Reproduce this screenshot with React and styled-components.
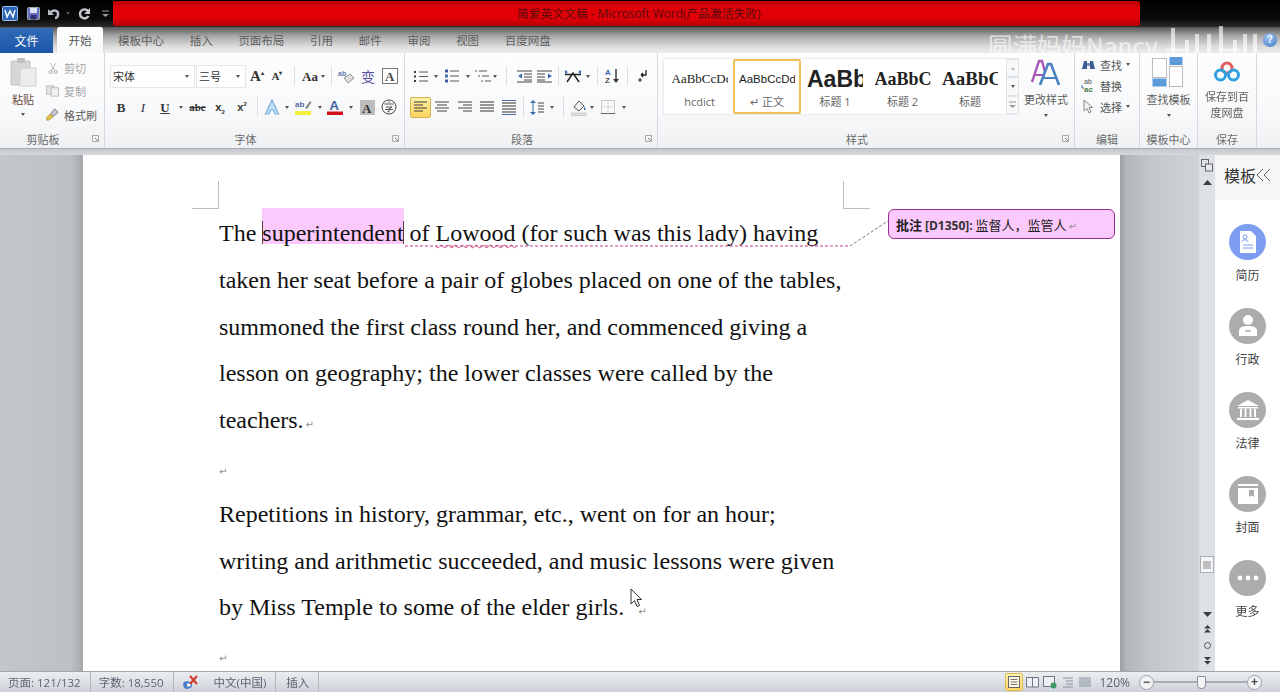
import React from "react";
import styled, { createGlobalStyle } from "styled-components";

const Global = createGlobalStyle`
  html, body { margin: 0; padding: 0; height: 692px; overflow: hidden; background: #c5c9cd; }
  #root { height: 692px; }
  * { box-sizing: border-box; }
`;
const UI = `"Open Sans", "Noto Sans CJK SC", "Liberation Sans", sans-serif`;

const Shell = styled.div`
  width: 1280px; height: 692px; display: flex; flex-direction: column; overflow: hidden;
  font-family: ${UI}; color: #555; font-size: 11px; filter: blur(.3px);
`;
const Header = styled.div`position: relative; height: 53px; overflow: hidden; flex: none;`;
const TitleBar = styled.div`
  height: 27px; display: flex; background: linear-gradient(#000, #0a0a0a 70%, #2a2a2a);
`;
const Quick = styled.div`width: 113px; display: flex; align-items: center; padding-left: 1px; flex: none;`;
const QuickSlot = styled.span`
  width: ${p => p.$w}px; display: flex; justify-content: center; align-items: center; flex: none;
`;
const RedBar = styled.div`
  width: 1027px; height: 25px; margin-top: 1px; border-radius: 2px; flex: none;
  background: linear-gradient(#b80000, #e30008 30%, #e00008 70%, #b40005);
  color: #540c0e; font-size: 11.8px; line-height: 25px; padding-left: 404px; white-space: nowrap;
`;
const TabRow = styled.div`
  height: 26px; display: flex; align-items: flex-end;
  background: linear-gradient(#565656, #a8a8a8 35%, #dcdcdc 75%, #ececec);
`;
const FileTab = styled.div`
  width: 53px; height: 25px; background: linear-gradient(#2f6cb8, #1d55a6); color: #fff;
  font-size: 12px; display: flex; align-items: center; justify-content: center; border-radius: 2px 2px 0 0;
`;
const ActiveTab = styled.div`
  width: 46px; height: 26px; margin: 0 15px 0 4px; background: linear-gradient(#fff, #f8f9fa); color: #555;
  font-size: 11.5px; display: flex; align-items: center; justify-content: center;
  border-radius: 3px 3px 0 0; box-shadow: 0 0 1px #999;
`;
const Tab = styled.div`
  height: 26px; margin-right: 25.7px; color: #5d5d5d; font-size: 11.5px; display: flex; align-items: center;
`;
const Watermark = styled.div`
  position: absolute; left: 988px; top: 31px; font-size: 24.5px; line-height: 30px; color: rgba(255,255,255,.62);
  font-family: "Noto Sans CJK SC", "Noto Sans", sans-serif; white-space: nowrap;
`;
const LogoMark = styled.svg`position: absolute; left: 1165px; top: 20px;`;
const HelpDot = styled.div`
  position: absolute; left: 1263px; top: 33px; width: 14px; height: 14px; border-radius: 50%;
  background: radial-gradient(circle at 40% 30%, #9cc4f2, #3f79c4); color: #fff; font: bold 10px/14px "Liberation Sans", sans-serif; text-align: center;
`;

const Ribbon = styled.div`
  height: 96px; flex: none; display: flex; background: linear-gradient(#fdfdfe, #f8f9fa 60%, #eff1f3);
  border-bottom: 1px solid #a9adb2;
`;
const Group = styled.div`
  width: ${p => p.$w}px; flex: none; display: flex; flex-direction: column; border-right: 1px solid #d5d8dc;
`;
const Body = styled.div`height: 76px; padding-top: ${p => p.$pt ?? 8}px; display: flex; flex-direction: ${p => p.$row ? "row" : "column"};`;
const GroupLabel = styled.div`height: 19px; display: flex; align-items: center; color: #6b6b6b; font-size: 11px;`;
const LabelText = styled.span`flex: 1; text-align: center;`;
const Launcher = styled.span`width: 18px; display: flex; justify-content: center;`;
const ToolRow = styled.div`
  height: ${p => p.$h}px; display: flex; align-items: center; padding-left: ${p => p.$pl || 0}px;
`;
const Tool = styled.span`
  width: ${p => p.$w}px; flex: none; display: flex; align-items: center; justify-content: center;
  height: ${p => p.$on ? "21px" : "auto"}; color: #333;
  ${p => p.$on && "background: linear-gradient(#fff2a8, #fcd35f); border: 1px solid #d8b050; border-radius: 2px;"}
`;
const Caret = styled.i`
  display: block; width: 0; height: 0; border: 2.5px solid transparent; border-top: 3px solid #555; border-bottom: 0;
`;
const UpCaret = styled.i`
  display: block; width: 0; height: 0; border: 2.5px solid transparent; border-bottom: 3px solid #bbb; border-top: 0;
`;
const Divider = styled.span`
  width: 1px; height: 20px; background: #dcdfe3; margin: 0 ${p => p.$m}px; flex: none;
`;
const Select = styled.div`
  width: ${p => p.$w}px; height: 23px; background: #fff; border: 1px solid #e4e6e9; margin-right: 1px; flex: none;
  display: flex; align-items: center; justify-content: space-between; padding: 0 5px 0 2px; color: #333; font-size: 11px;
`;
const PasteColumn = styled.div`width: 46px; flex: none; display: flex; flex-direction: column; align-items: center; color: #6b4a42;`;
const PasteName = styled.span`margin-top: 5px; line-height: 16px; font-size: 11px;`;
const BelowCaret = styled.span`margin-top: ${p => p.$m || 6}px; display: block;`;
const SmallColumn = styled.div`display: flex; flex-direction: column; margin-top: -1px;`;
const SmallTool = styled.div`
  height: 23.5px; display: flex; align-items: center; gap: 5px; font-size: 11px; color: ${p => p.$dim ? "#a4a4a4" : "#5b5b5b"};
`;
const Gallery = styled.div`
  width: 355px; height: 57px; margin: 0 0 0 5px; background: #fff; border: 1px solid #e8eaed; border-right: 0;
  display: flex; padding-left: 2px; flex: none;
`;
const StyleCard = styled.div`
  width: ${p => p.$w}px; flex: none; display: flex; flex-direction: column; align-items: center; overflow: hidden;
  ${p => p.$on && "border: 2px solid #eec25a; border-radius: 2px; box-shadow: inset 0 0 2px #fff6c8;"}
  padding-top: ${p => p.$on ? 3 : 5}px;
`;
const Sample = styled.div`
  height: 30px; line-height: 30px; white-space: nowrap; color: #222; overflow: hidden; width: 56px; text-align: left;
  font: ${p => p.$font};
`;
const StyleName = styled.div`font-size: 11px; line-height: 16px; color: #666;`;
const Scroller = styled.div`width: 13px; margin-left: 2px; display: flex; flex-direction: column; flex: none;`;
const ScrollBtn = styled.div`
  flex: 1; background: #f7f8f9; border: 1px solid #e0e3e6; display: flex; align-items: center; justify-content: center;
`;
const BigTool = styled.div`
  width: ${p => p.$w}px; flex: none; display: flex; flex-direction: column; align-items: center; color: #5f5f5f; font-size: 11px; line-height: 16px;
`;
const BigCaption = styled.span`margin-top: ${p => p.$m || 0}px;`;
const EditRow = styled.div`
  height: 21px; display: flex; align-items: center; padding-left: 6px; gap: 4px; font-size: 11px; color: #555;
`;

const Separator = styled.div`height: 6px; flex: none; background: linear-gradient(#c5c8cc, #d6d9dc);`;
const Workspace = styled.div`height: 516px; flex: none; display: flex;`;
const LeftGutter = styled.div`width: 83px; flex: none; background: linear-gradient(90deg, #c3c7ca, #bdc1c4 85%, #a6a9ac);`;
const Page = styled.div`
  width: 1037px; flex: none; background: #fff; position: relative; overflow: hidden; padding: 55px 0 0 136px;
`;
const RightGutter = styled.div`width: 79px; flex: none; background: linear-gradient(90deg, #9b9ea2, #b3b7bb 8%, #c2c7cb 40%, #cfd4d9);`;
const Line = styled.div`
  height: 46.8px; font-family: "Liberation Serif", serif; font-size: 24px; line-height: 46px; color: #111; white-space: nowrap;
`;
const Marked = styled.span`
  position: relative; display: inline-block; background: #fcc9fc; height: 36px; line-height: 24px; padding-top: 13px; vertical-align: baseline;
  margin-top: -8px;
  &::before, &::after { content: ""; position: absolute; top: 13px; bottom: 0; width: 1px; background: #5b3a3a; }
  &::before { left: 0; }
  &::after { right: 0; }
`;
const Wavy = styled.span`text-decoration: underline wavy #d9487a 1px; text-underline-offset: 3px;`;
const Para = styled.span`
  font-family: "DejaVu Sans", sans-serif; font-size: 10px; color: #8e8e8e; margin-left: ${p => p.$gap ?? 2}px;
`;
const Crop = styled.div`
  position: absolute; width: 27px; height: 28px; top: 26px; left: ${p => p.$x}px; border-bottom: 1px solid #bdbdbd;
  ${p => p.$r ? "border-left: 1px solid #bdbdbd;" : "border-right: 1px solid #bdbdbd;"}
`;
const Connector = styled.svg`position: absolute; left: 0; top: 0;`;
const Comment = styled.div`
  position: absolute; left: 805px; top: 54px; width: 227px; height: 30px; background: #fcc9fc;
  border: 1px solid #932c93; border-radius: 6px; padding-left: 7px; font-size: 13px; line-height: 29px; color: #222;
  font-family: "Noto Sans CJK SC", sans-serif; white-space: nowrap;
`;
const CommentHead = styled.b`font-family: "Noto Sans CJK SC", sans-serif;`;
const CommentRef = styled.b`font-family: "Open Sans", sans-serif; font-size: 12px; color: #333;`;
const Pointer = styled.svg`position: absolute; left: 547px; top: 433px;`;

const VBar = styled.div`width: 16px; flex: none; background: #dde1e6; display: flex; flex-direction: column; align-items: center;`;
const VSlot = styled.div`height: ${p => p.$h}px; margin-top: ${p => p.$t || 0}px; display: flex; align-items: center; justify-content: center;`;
const Thumb = styled.div`
  width: 14px; height: 17px; margin-top: 368px; background: #f5f6f8; border: 1px solid #a9afb6; display: flex; align-items: center; justify-content: center;
`;
const SidePanel = styled.div`width: 65px; flex: none; background: #fff; display: flex; flex-direction: column; align-items: center;`;
const PanelHead = styled.div`
  width: 100%; height: 45px; padding-bottom: 6px; background: #f6f6f6; display: flex; align-items: center; justify-content: center;
  color: #333; font-size: 16px;
`;
const PanelList = styled.div`display: flex; flex-direction: column; gap: 25px; padding-top: 24px;`;
const PanelItem = styled.div`display: flex; flex-direction: column; align-items: center; gap: 9px; color: #444; font-size: 12px; line-height: 14px;`;
const Round = styled.div`
  width: 37px; height: 36px; border-radius: 50%; background: ${p => p.$c}; display: flex; align-items: center; justify-content: center;
`;

const StatusBar = styled.div`
  height: 21px; flex: none; display: flex; align-items: center; background: linear-gradient(#eceef1, #dde0e5 50%, #cdd1d7);
  border-top: 1px solid #a3a7ac; color: #5b6470; font-size: 11.5px; white-space: nowrap;
`;
const StatusCell = styled.div`
  height: 100%; display: flex; align-items: center; gap: ${p => p.$gap || 0}px; padding: 0 ${p => p.$pr ?? 9}px 0 ${p => p.$pl ?? 8}px;
  border-right: 1px solid #b3b7bd; flex: none;
`;
const StatusRight = styled.div`margin-left: auto; display: flex; align-items: center; height: 100%;`;
const ViewBtn = styled.span`
  width: ${p => p.$w || 18}px; height: 18px; display: flex; align-items: center; justify-content: center; flex: none;
  ${p => p.$on && "background: linear-gradient(#fff3b0, #fbd76a); border: 1px solid #e0b94f; border-radius: 2px;"}
`;
const Zoom = styled.span`margin: 0 9px 0 7px; font-size: 12px; color: #5b6470;`;
const RoundBtn = styled.span`
  width: 15px; height: 15px; border-radius: 50%; border: 1px solid #9aa0a8; background: #f3f4f6; flex: none;
  display: flex; align-items: center; justify-content: center; font: bold 12px/12px "Liberation Sans", sans-serif; color: #4a4a4a;
`;
const Track = styled.div`
  width: 93px; height: 2px; background: #a8adb4; display: flex; justify-content: flex-start; align-items: center; padding-left: 43px;
`;
const Handle = styled.span`
  width: 9px; height: 13px; background: #f5f5f5; border: 1px solid #8a9099; border-radius: 1px 1px 4px 4px; flex: none;
`;
const Grip = styled.span`width: 18px;`;

const S = ({ w = 16, h = 16, vb, children }) => (
  <svg width={w} height={h} viewBox={vb || `0 0 ${w} ${h}`} fill="none">{children}</svg>
);
const Lines = ({ ys, x1 = 2, x2 = 14, c = "#444" }) => ys.map((y, i) => (
  <path key={i} d={`M${Array.isArray(x1) ? x1[i] : x1} ${y}H${Array.isArray(x2) ? x2[i] : x2}`} stroke={c} />
));
const Launch = () => <S w={7} h={7}><path d="M.5 .5H6.5V6.5H.5Z" stroke="#aaa" /><path d="M3 3L6 6" stroke="#777" /></S>;

const Word = () => <S w={16} h={15}><rect x=".5" y=".5" width="15" height="14" rx="1" fill="#2a64b4" stroke="#9dc0ea" /><path d="M3 4L5 11L8 5L11 11L13 4" stroke="#fff" strokeWidth="1.5" /></S>;
const Save = () => <S w={13} h={13}><rect x=".5" y=".5" width="12" height="12" rx="1" fill="#6b6fc4" stroke="#9aa" /><rect x="3" y="1" width="7" height="5" fill="#dfe2f4" /><rect x="3.5" y="8" width="6" height="4.5" fill="#2e2f70" /></S>;
const Undo = () => <S w={14} h={13}><path d="M3 6C6 2 12 3 11 8C10.7 10 9 11 8 11" stroke="#b8bcc6" strokeWidth="2.4" /><path d="M1 2V8H7Z" fill="#b8bcc6" /></S>;
const Redo = () => <S w={13} h={13}><path d="M10 4A4.5 4.5 0 1 0 10.5 9" stroke="#c8cad0" strokeWidth="2.4" /><path d="M12 1V7H6Z" fill="#c8cad0" /></S>;
const Custom = () => <S w={7} h={8}><path d="M0 1H7" stroke="#9a9a9a" /><path d="M0 4H7L3.5 7Z" fill="#9a9a9a" /></S>;

const Paste = () => <S w={27} h={30}><rect x="1" y="4" width="19" height="24" rx="1" fill="#d6d6d6" stroke="#c4c4c4" /><rect x="7" y="1" width="8" height="5" fill="#c0c0c0" /><rect x="10" y="11" width="16" height="18" fill="#ececec" stroke="#d0d0d0" /></S>;
const Scissor = () => <S w={10} h={12}><path d="M2 1L7 9M8 1L3 9" stroke="#bbb" /><circle cx="2.5" cy="10" r="1.5" stroke="#aaa" /><circle cx="7.5" cy="10" r="1.5" stroke="#aaa" /></S>;
const CopyIco = () => <S w={14} h={12}><rect x=".5" y=".5" width="8" height="9" fill="#e2e2e2" stroke="#bbb" /><rect x="5.5" y="2.5" width="8" height="9" fill="#f0f0f0" stroke="#bbb" /></S>;
const Brush = () => <S w={15} h={15}><path d="M10 1L14 5L8 10L5 7Z" fill="#c4c8d0" stroke="#777" /><path d="M5 7L8 10L3 14H1V11Z" fill="#e7c94d" stroke="#a89030" /></S>;

const Letter = styled.span`
  font-family: ${p => p.$f || '"Liberation Serif", serif'}; font-weight: ${p => p.$b ? 700 : 400}; font-style: ${p => p.$i ? "italic" : "normal"};
  font-size: ${p => p.$s}px; color: ${p => p.$c || "#333"}; text-decoration: ${p => p.$u ? "underline" : p.$st ? "line-through" : "none"}; line-height: 1;
`;
const Sup = styled.sup`font-size: 6px; line-height: 0;`;
const Sub = styled.sub`font-size: 6px; line-height: 0;`;
const Eraser = () => <S w={18} h={16}><text x="1" y="8" fontSize="7" fontWeight="700" fill="#6a78b0" fontFamily="Liberation Sans">ab</text><path d="M7 10L13 6L17 10L11 15Z" fill="#ddd" stroke="#999" /></S>;
const Boxed = () => <S w={16} h={16}><rect x=".5" y=".5" width="15" height="15" fill="#fff" stroke="#777" /><text x="3" y="13" fontSize="13" fontWeight="700" fill="#444" fontFamily="Liberation Serif">A</text></S>;
const Highlight = () => <S w={17} h={17}><text x="0" y="8" fontSize="8" fontWeight="700" fill="#5a66a8" fontFamily="Liberation Sans">ab</text><path d="M10 9L15 2L16.5 3.5L12 10Z" fill="#888" /><rect y="12" width="16" height="4" fill="#f6ee3c" /></S>;
const ColorA = () => <S w={16} h={17}><text x="2.5" y="11" fontSize="13" fontWeight="700" fill="#3e5fa4" fontFamily="Liberation Sans">A</text><rect y="12.5" width="16" height="3.5" fill="#d4121c" /></S>;
const GreyA = () => <S w={15} h={15}><rect width="15" height="15" fill="#bdbdbd" /><text x="2" y="13" fontSize="13" fontWeight="700" fill="#333" fontFamily="Liberation Serif">A</text></S>;
const Circled = () => <S w={16} h={16}><circle cx="8" cy="8" r="7" stroke="#444" /><path d="M8 2.5V4M3.5 5H12.5M5 8H11L8 10V13L6.5 12.5M4 10.5H12" stroke="#444" strokeWidth=".9" /></S>;
const GlowA = () => <S w={16} h={16}><path d="M8 1L14.5 15H11L9.5 11H6.5L5 15H1.5Z" fill="#c4e0f6" stroke="#7eb0e0" strokeWidth="1.2" /></S>;

const Bullets = () => <S w={14} h={13}>{[2, 6.5, 11].map(y => <React.Fragment key={y}><rect x="0" y={y - 1} width="2" height="2" fill="#3a3a3a" /><path d={`M5 ${y}H14`} stroke="#555" /></React.Fragment>)}</S>;
const Numbers = () => <S w={14} h={14}>{[2, 7, 12].map((y, i) => <React.Fragment key={y}><rect x="0" y={y - 1.5} width="3" height="3" fill={i === 1 ? "#4d6fb0" : "#3a5a98"} /><path d={`M5 ${y}H14`} stroke="#555" /></React.Fragment>)}</S>;
const Multi = () => <S w={16} h={14}><path d="M0 2H2M4 2H12M3 7H5M7 7H14M6 12H8M10 12H16" stroke="#555" /></S>;
const Outdent = () => <S w={16} h={13}><Lines ys={[1, 4, 7, 10, 12]} x1={[0, 7, 7, 7, 0]} x2={[15, 15, 15, 15, 15]} /><path d="M5 3.5L1 6L5 8.5Z" fill="#3b68a8" /></S>;
const Indent = () => <S w={16} h={13}><Lines ys={[1, 4, 7, 10, 12]} x1={[0, 0, 0, 0, 0]} x2={[15, 8, 8, 8, 15]} /><path d="M11 3.5L15 6L11 8.5Z" fill="#3b68a8" /></S>;
const Asian = () => <S w={18} h={13}><path d="M3 12L9 3L15 12M1 4.5H17" stroke="#222" strokeWidth="1.5" /><path d="M1 0L4 2L1 4ZM17 0L14 2L17 4Z" fill="#3b68a8" /></S>;
const Sort = () => <S w={16} h={16}><text x="0" y="7" fontSize="8" fill="#3b68a8" fontFamily="Liberation Sans" fontWeight="700">A</text><text x="0" y="15" fontSize="8" fill="#555" fontFamily="Liberation Sans" fontWeight="700">Z</text><path d="M11 1V13" stroke="#333" strokeWidth="1.4" /><path d="M8 11H14L11 15Z" fill="#333" /></S>;
const Pilcrow = () => <S w={12} h={14}><path d="M9 1V6H4M4 6L6 4M4 6L6 8" stroke="#222" strokeWidth="1.3" /><path d="M1 11H5M3 9V13" stroke="#222" /></S>;
const AlignLeft = () => <S w={14} h={12}><Lines ys={[1, 4, 7, 10]} x1={0} x2={[13, 9, 13, 9]} c="#3c3c3c" /></S>;
const AlignCenter = () => <S w={14} h={12}><Lines ys={[1, 4, 7, 10]} x1={[0, 2, 0, 2]} x2={[14, 12, 14, 12]} /></S>;
const AlignRight = () => <S w={14} h={12}><Lines ys={[1, 4, 7, 10]} x1={[0, 5, 0, 5]} x2={14} /></S>;
const Justify = () => <S w={14} h={12}><Lines ys={[1, 4, 7, 10]} x1={0} x2={14} c="#333" /></S>;
const Distribute = () => <S w={16} h={15}><Lines ys={[3, 6, 9, 12]} x1={1} x2={15} c="#333" /><path d="M1 .5H15M1 14.5H15" stroke="#4a6aa8" /></S>;
const Spacing = () => <S w={14} h={15}><path d="M3 0L6 3H0ZM3 15L0 12H6Z" fill="#3b68a8" /><path d="M3 3V12" stroke="#3b68a8" /><Lines ys={[3, 6, 9, 12]} x1={8} x2={14} /></S>;
const Fill = () => <S w={16} h={17}><path d="M3 8L8 2L13 7L8 12Z" fill="#f0f0f0" stroke="#555" /><path d="M13 7L15 11L13 11Z" fill="#3b68a8" /><rect y="14" width="15" height="2.5" fill="#e4e4e4" stroke="#aaa" strokeWidth=".5" /></S>;
const Borders = () => <S w={14} h={14}><rect x=".5" y=".5" width="13" height="13" stroke="#a0a0a0" strokeDasharray="1 1" /><path d="M7 1V13M1 7H13" stroke="#bbb" strokeDasharray="1 1" /><path d="M0 13.5H14" stroke="#666" /></S>;

const ChangeIco = () => <S w={30} h={30}><path d="M1 24L8 3H11L14 14" stroke="#a858b8" strokeWidth="2.4" /><path d="M4 17H12" stroke="#a858b8" strokeWidth="2" /><path d="M9 27L17 6H20L28 27" stroke="#4a80c0" strokeWidth="2.6" /><path d="M12 20H25" stroke="#4a80c0" strokeWidth="2" /></S>;
const Binoc = () => <S w={15} h={13}><path d="M1 11L3 3H6V11ZM9 11V3H12L14 11Z" fill="#3a5c94" /><rect x="6" y="5" width="3" height="3" fill="#7b92b8" /></S>;
const Replace = () => <S w={15} h={15}><text x="3" y="6" fontSize="7" fill="#444" fontFamily="Liberation Sans">ab</text><text x="3" y="14" fontSize="8" fontWeight="700" fill="#4a7a4a" fontFamily="Liberation Sans">ac</text><path d="M1 7V10H3" stroke="#4a6aa8" /></S>;
const Arrow = () => <S w={15} h={15}><path d="M3 1V12L6 9.5L8 14L10 13L8 8.5H11.5Z" fill="#f4f4f4" stroke="#888" /></S>;
const Finder = () => <S w={33} h={32}><rect x=".5" y="1.5" width="14" height="19" fill="#fff" stroke="#bbb" /><rect x=".5" y="21.5" width="14" height="8" fill="#5d9bd8" /><rect x="17.5" y="0" width="13" height="8" fill="#5d9bd8" /><rect x="17.5" y="9.5" width="13" height="20" fill="#fff" stroke="#bbb" /></S>;
const Cloud = () => <S w={26} h={22}><circle cx="13" cy="7" r="5" stroke="#e05a5a" strokeWidth="3" /><circle cx="6.5" cy="14" r="5" stroke="#2f9fe0" strokeWidth="3" /><circle cx="19.5" cy="14" r="5" stroke="#2f9fe0" strokeWidth="3" /></S>;

const Ruler = () => <S w={12} h={13}><rect x=".5" y=".5" width="7" height="7" stroke="#666" /><rect x="4.5" y="5" width="7" height="7" stroke="#666" fill="#e8eaee" /></S>;
const Tri = ({ d }) => <S w={9} h={5}><path d={d ? "M0 0H9L4.5 5Z" : "M0 5H9L4.5 0Z"} fill="#3c3c3c" /></S>;
const Dbl = ({ d }) => <S w={7} h={8}><path d={d ? "M0 0H7L3.5 3.5ZM0 4H7L3.5 7.5Z" : "M0 3.5H7L3.5 0ZM0 7.5H7L3.5 4Z"} fill="#3c3c3c" /></S>;
const Ring = () => <S w={7} h={7}><circle cx="3.5" cy="3.5" r="3" stroke="#555" /></S>;
const ThumbLines = () => <S w={8} h={8}><Lines ys={[1, 3, 5, 7]} x1={0} x2={8} c="#888" /></S>;
const Chev = () => <S w={15} h={14}><path d="M7 1L1 7L7 13M14 1L8 7L14 13" stroke="#666" strokeWidth="1" /></S>;

const DocIco = () => <S w={18} h={22}><path d="M1 0H12L17 5V22H1Z" fill="#fff" /><circle cx="6" cy="6" r="2" stroke="#7b9cf0" /><path d="M3 11C3 8 9 8 9 11M4 14H14M4 17H14" stroke="#7b9cf0" /></S>;
const PersonIco = () => <S w={22} h={24}><circle cx="11" cy="6" r="5" fill="#fff" /><path d="M2 22V17C2 13 6 12 11 12C16 12 20 13 20 17V22Z" fill="#fff" /><path d="M8 17H14" stroke="#acacac" strokeWidth="1.4" /></S>;
const BankIco = () => <S w={24} h={22}><path d="M12 1L23 7H1Z" fill="#fff" /><path d="M2 8H22V9.5H2ZM1 19H23V21H1Z" fill="#fff" /><path d="M5 10V18M9.5 10V18M14.5 10V18M19 10V18" stroke="#fff" strokeWidth="2" /></S>;
const CoverIco = () => <S w={22} h={22}><path d="M1 1H21V3H1Z" fill="#fff" /><path d="M1 5H21V21H1Z" fill="#fff" /><path d="M12 7H17V14L14.5 12.5L12 14Z" fill="#acacac" /></S>;
const DotsIco = () => <S w={24} h={6}><circle cx="4" cy="3" r="2.4" fill="#fff" /><circle cx="12" cy="3" r="2.4" fill="#fff" /><circle cx="20" cy="3" r="2.4" fill="#fff" /></S>;

const LangIco = () => <S w={18} h={15}><path d="M1 9C1 6 6 5 9 8C12 11 8 14 5 14C3 14 1 12 1 9Z" fill="#4a7cc8" /><path d="M5 9C6 8 8 8 9 10C8 12 6 12 5 11Z" fill="#fff" /><path d="M8 1L15 9M15 1L8 9" stroke="#d3362c" strokeWidth="2" /></S>;
const PrintView = () => <S w={12} h={12}><rect x=".5" y=".5" width="11" height="11" stroke="#666" fill="#fffbe6" /><Lines ys={[3.5, 6, 8.5]} x1={2.5} x2={9.5} c="#777" /></S>;
const ReadView = () => <S w={13} h={12}><path d="M.5 1.5H6.5V11H.5ZM6.5 1.5H12.5V11H6.5Z" stroke="#6a7788" fill="#eef0f4" /></S>;
const WebView = () => <S w={14} h={13}><rect x=".5" y=".5" width="11" height="10" stroke="#6a7788" fill="#eef0f4" /><circle cx="10.5" cy="9.5" r="3" fill="#3f9a62" /></S>;
const OutlineView = () => <S w={12} h={11}><Lines ys={[1, 4, 7, 10]} x1={[1, 4, 4, 1]} x2={11} c="#8a94a2" /></S>;
const DraftView = () => <S w={12} h={11}><Lines ys={[1, 3, 5, 7, 9]} x1={0} x2={12} c="#8a94a2" /></S>;

const tabs = ["模板中心", "插入", "页面布局", "引用", "邮件", "审阅", "视图", "百度网盘"];
const styleCards = [
  { w: 67, name: "hcdict", sample: "AaBbCcDc", font: '13px/30px "Liberation Serif", serif' },
  { w: 68, name: "↵ 正文", sample: "AaBbCcDd", font: '11.5px/30px "Liberation Sans", sans-serif', on: true },
  { w: 68, name: "标题 1", sample: "AaBbC", font: '700 23px/30px "Liberation Sans", sans-serif' },
  { w: 67, name: "标题 2", sample: "AaBbC", font: '700 18px/30px "Liberation Serif", serif' },
  { w: 68, name: "标题", sample: "AaBbC", font: '700 19px/30px "Liberation Serif", serif' },
];
const panel = [
  { name: "简历", c: "#7d9ef0", icon: <DocIco /> },
  { name: "行政", c: "#acacac", icon: <PersonIco /> },
  { name: "法律", c: "#acacac", icon: <BankIco /> },
  { name: "封面", c: "#acacac", icon: <CoverIco /> },
  { name: "更多", c: "#acacac", icon: <DotsIco /> },
];
const logoBars = [[6, 8, 30], [20, 20, 20], [30, 14, 24], [42, 14, 24], [54, 6, 32], [68, 20, 20], [78, 14, 24], [88, 14, 24]];

export default function App() {
  return (
    <Shell>
      <Global />
      <Header>
        <TitleBar>
          <Quick>
            <QuickSlot $w={17}><Word /></QuickSlot>
            <QuickSlot $w={4} />
            <QuickSlot $w={22}><Save /></QuickSlot>
            <QuickSlot $w={20}><Undo /></QuickSlot>
            <QuickSlot $w={8}><Caret /></QuickSlot>
            <QuickSlot $w={24}><Redo /></QuickSlot>
            <QuickSlot $w={5} />
            <QuickSlot $w={8}><Custom /></QuickSlot>
          </Quick>
          <RedBar>简爱英文文稿 - Microsoft Word(产品激活失败)</RedBar>
        </TitleBar>
        <TabRow>
          <FileTab>文件</FileTab>
          <ActiveTab>开始</ActiveTab>
          {tabs.map(t => <Tab key={t}>{t}</Tab>)}
        </TabRow>
        <Watermark>圆满妈妈Nancy</Watermark>
        <LogoMark width="96" height="34" viewBox="0 0 96 34">
          {logoBars.map(([x, y, h]) => <rect key={x} x={x} y={y} width="4" height={h} fill="#fff" opacity=".62" />)}
          <path d="M0 30H22M54 30H76" stroke="#fff" strokeWidth="3" opacity=".5" />
        </LogoMark>
        <HelpDot>?</HelpDot>
      </Header>

      <Ribbon>
        <Group $w={105}>
          <Body $row $pt={4}>
            <PasteColumn>
              <Paste />
              <PasteName>粘贴</PasteName>
              <BelowCaret $m={5}><Caret /></BelowCaret>
            </PasteColumn>
            <SmallColumn>
              <SmallTool $dim><Tool $w={13}><Scissor /></Tool>剪切</SmallTool>
              <SmallTool $dim><Tool $w={13}><CopyIco /></Tool>复制</SmallTool>
              <SmallTool><Tool $w={13}><Brush /></Tool>格式刷</SmallTool>
            </SmallColumn>
          </Body>
          <GroupLabel><LabelText>剪贴板</LabelText><Launcher><Launch /></Launcher></GroupLabel>
        </Group>

        <Group $w={300}>
          <Body>
            <ToolRow $h={30} $pl={5}>
              <Select $w={85}>宋体<Caret /></Select>
              <Select $w={50}>三号<Caret /></Select>
              <Tool $w={20}><Letter $b $s={15}>A<Sup>▴</Sup></Letter></Tool>
              <Tool $w={20}><Letter $b $s={11}>A<Sup>▾</Sup></Letter></Tool>
              <Divider $m={6.5} />
              <Tool $w={18}><Letter $b $s={13}>Aa</Letter></Tool>
              <Tool $w={8}><Caret /></Tool>
              <Divider $m={3.5} />
              <Tool $w={22}><Eraser /></Tool>
              <Tool $w={22}><Letter $f='"Noto Sans CJK SC"' $s={14} $c="#5a4fa0">变</Letter></Tool>
              <Tool $w={22}><Boxed /></Tool>
            </ToolRow>
            <ToolRow $h={32} $pl={5}>
              <Tool $w={22}><Letter $b $s={13}>B</Letter></Tool>
              <Tool $w={22}><Letter $i $s={13}>I</Letter></Tool>
              <Tool $w={22}><Letter $b $u $s={13}>U</Letter></Tool>
              <Tool $w={10}><Caret /></Tool>
              <Tool $w={23}><Letter $b $st $s={11}>abc</Letter></Tool>
              <Tool $w={22}><Letter $b $f='"Liberation Sans"' $s={11}>x<Sub>2</Sub></Letter></Tool>
              <Tool $w={22}><Letter $b $f='"Liberation Sans"' $s={11}>x<Sup>2</Sup></Letter></Tool>
              <Divider $m={3.5} />
              <Tool $w={22}><GlowA /></Tool>
              <Tool $w={8}><Caret /></Tool>
              <Tool $w={24}><Highlight /></Tool>
              <Tool $w={9}><Caret /></Tool>
              <Tool $w={22}><ColorA /></Tool>
              <Tool $w={10}><Caret /></Tool>
              <Tool $w={22}><GreyA /></Tool>
              <Tool $w={22}><Circled /></Tool>
            </ToolRow>
          </Body>
          <GroupLabel><LabelText>字体</LabelText><Launcher><Launch /></Launcher></GroupLabel>
        </Group>

        <Group $w={253}>
          <Body>
            <ToolRow $h={30} $pl={7}>
              <Tool $w={18}><Bullets /></Tool>
              <Tool $w={12}><Caret /></Tool>
              <Tool $w={19}><Numbers /></Tool>
              <Tool $w={13}><Caret /></Tool>
              <Tool $w={18}><Multi /></Tool>
              <Tool $w={6}><Caret /></Tool>
              <Divider $m={8} />
              <Tool $w={20}><Outdent /></Tool>
              <Tool $w={20}><Indent /></Tool>
              <Divider $m={2.5} />
              <Tool $w={24}><Asian /></Tool>
              <Tool $w={6}><Caret /></Tool>
              <Divider $m={5.5} />
              <Tool $w={20}><Sort /></Tool>
              <Divider $m={3.5} />
              <Tool $w={24}><Pilcrow /></Tool>
            </ToolRow>
            <ToolRow $h={32} $pl={5}>
              <Tool $w={21} $on><AlignLeft /></Tool>
              <Tool $w={22}><AlignCenter /></Tool>
              <Tool $w={23}><AlignRight /></Tool>
              <Tool $w={22}><Justify /></Tool>
              <Tool $w={22}><Distribute /></Tool>
              <Divider $m={2.5} />
              <Tool $w={22}><Spacing /></Tool>
              <Tool $w={8}><Caret /></Tool>
              <Divider $m={6.5} />
              <Tool $w={18}><Fill /></Tool>
              <Tool $w={8}><Caret /></Tool>
              <Tool $w={24}><Borders /></Tool>
              <Tool $w={8}><Caret /></Tool>
            </ToolRow>
          </Body>
          <GroupLabel><LabelText>段落</LabelText><Launcher><Launch /></Launcher></GroupLabel>
        </Group>

        <Group $w={417}>
          <Body $row $pt={5}>
            <Gallery>
              {styleCards.map(c => (
                <StyleCard key={c.name} $w={c.w} $on={c.on}>
                  <Sample $font={c.font}>{c.sample}</Sample>
                  <StyleName>{c.name}</StyleName>
                </StyleCard>
              ))}
              <Scroller>
                <ScrollBtn><UpCaret /></ScrollBtn>
                <ScrollBtn><Caret /></ScrollBtn>
                <ScrollBtn><Custom /></ScrollBtn>
              </Scroller>
            </Gallery>
            <BigTool $w={56}>
              <ChangeIco />
              <BigCaption $m={4}>更改样式</BigCaption>
              <BelowCaret $m={6}><Caret /></BelowCaret>
            </BigTool>
          </Body>
          <GroupLabel><LabelText>样式</LabelText><Launcher><Launch /></Launcher></GroupLabel>
        </Group>

        <Group $w={65}>
          <Body $pt={1}>
            <EditRow><Binoc />查找<Caret /></EditRow>
            <EditRow><Replace />替换</EditRow>
            <EditRow><Arrow />选择<Caret /></EditRow>
          </Body>
          <GroupLabel><LabelText>编辑</LabelText></GroupLabel>
        </Group>

        <Group $w={58}>
          <Body $pt={4}>
            <BigTool $w={57}>
              <Finder />
              <BigCaption $m={3}>查找模板</BigCaption>
              <BelowCaret $m={6}><Caret /></BelowCaret>
            </BigTool>
          </Body>
          <GroupLabel><LabelText>模板中心</LabelText></GroupLabel>
        </Group>

        <Group $w={59}>
          <Body $pt={8}>
            <BigTool $w={58}>
              <Cloud />
              <BigCaption $m={6}>保存到百</BigCaption>
              <BigCaption>度网盘</BigCaption>
            </BigTool>
          </Body>
          <GroupLabel><LabelText>保存</LabelText></GroupLabel>
        </Group>
      </Ribbon>
      <Separator />

      <Workspace>
        <LeftGutter />
        <Page>
          <Line>The <Marked>superintendent</Marked> of <Wavy>Lowood</Wavy> (for such was this lady) having</Line>
          <Line>taken her seat before a pair of globes placed on one of the tables,</Line>
          <Line>summoned the first class round her, and commenced giving a</Line>
          <Line>lesson on geography; the lower classes were called by the</Line>
          <Line>teachers.<Para>↵</Para></Line>
          <Line><Para $gap={0}>↵</Para></Line>
          <Line>Repetitions in history, grammar, etc., went on for an hour;</Line>
          <Line>writing and arithmetic succeeded, and music lessons were given</Line>
          <Line>by Miss Temple to some of the elder girls.<Para $gap={14}>↵</Para></Line>
          <Line><Para $gap={0}>↵</Para></Line>
          <Crop $x={109} />
          <Crop $x={760} $r />
          <Connector width="1037" height="100">
            <path d="M322 91H767" stroke="#c0408a" strokeDasharray="3 2" />
            <path d="M767 91L805 66" stroke="#777" strokeDasharray="3 2" />
          </Connector>
          <Comment><CommentHead>批注</CommentHead> <CommentRef>[D1350]:</CommentRef> 监督人，监管人<Para>↵</Para></Comment>
          <Pointer width="12" height="20" viewBox="0 0 12 20">
            <path d="M1 1V16L4.5 12.5L7 18.5L9.5 17.5L7 11.5H11.5Z" fill="#fff" stroke="#333" />
          </Pointer>
        </Page>
        <RightGutter />
        <VBar>
          <VSlot $h={15} $t={3}><Ruler /></VSlot>
          <VSlot $h={12} $t={3}><Tri /></VSlot>
          <Thumb><ThumbLines /></Thumb>
          <VSlot $h={10} $t={36}><Tri d /></VSlot>
          <VSlot $h={10} $t={5}><Dbl /></VSlot>
          <VSlot $h={10} $t={6}><Ring /></VSlot>
          <VSlot $h={10} $t={6}><Dbl d /></VSlot>
        </VBar>
        <SidePanel>
          <PanelHead>模板<Chev /></PanelHead>
          <PanelList>
            {panel.map(p => (
              <PanelItem key={p.name}>
                <Round $c={p.c}>{p.icon}</Round>
                {p.name}
              </PanelItem>
            ))}
          </PanelList>
        </SidePanel>
      </Workspace>

      <StatusBar>
        <StatusCell>页面: 121/132</StatusCell>
        <StatusCell>字数: 18,550</StatusCell>
        <StatusCell $gap={14}><LangIco />中文(中国)</StatusCell>
        <StatusCell $pl={10}>插入</StatusCell>
        <StatusRight>
          <ViewBtn $on><PrintView /></ViewBtn>
          <ViewBtn><ReadView /></ViewBtn>
          <ViewBtn><WebView /></ViewBtn>
          <ViewBtn><OutlineView /></ViewBtn>
          <ViewBtn $w={15}><DraftView /></ViewBtn>
          <Zoom>120%</Zoom>
          <RoundBtn>−</RoundBtn>
          <Track><Handle /></Track>
          <RoundBtn>+</RoundBtn>
          <Grip />
        </StatusRight>
      </StatusBar>
    </Shell>
  );
}
